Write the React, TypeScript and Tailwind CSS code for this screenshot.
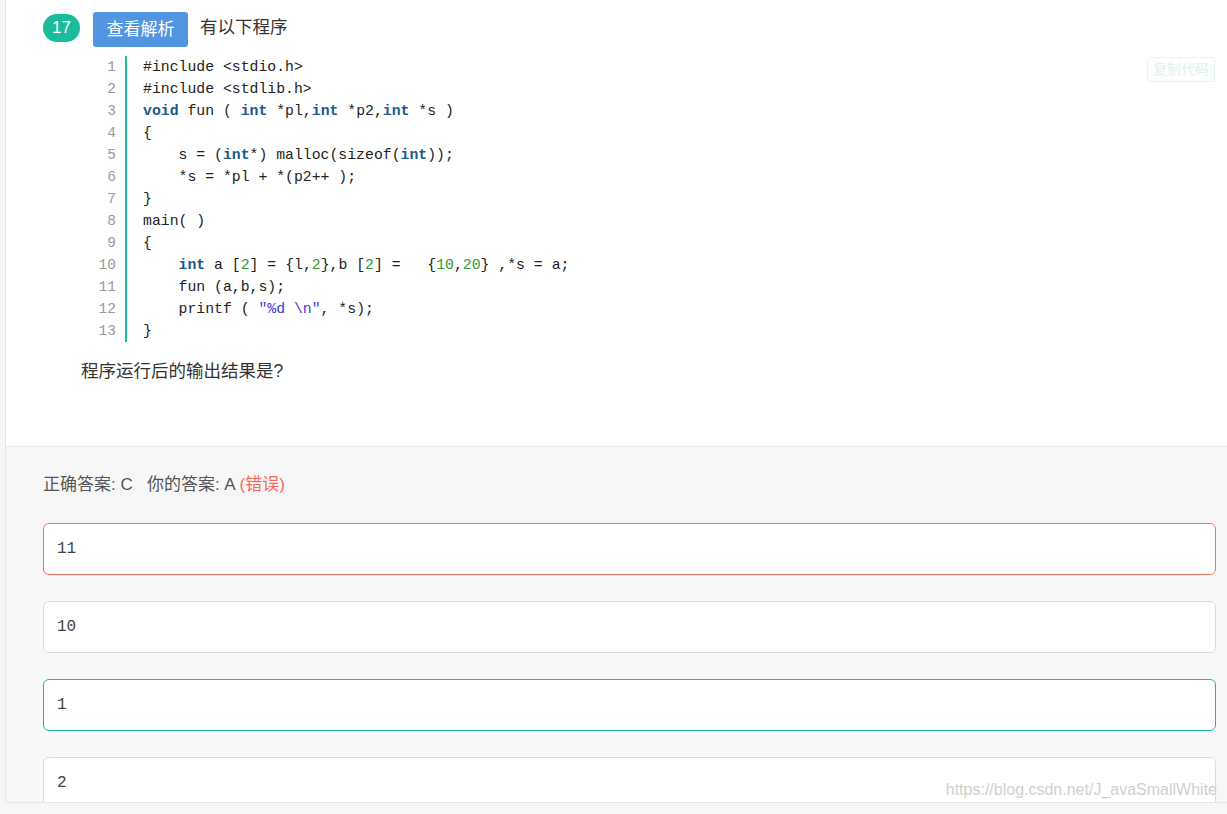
import React from "react";

const mono = { fontFamily: "'Liberation Mono', 'DejaVu Sans Mono', monospace" };

const K = ({ children }: { children: React.ReactNode }) => (
  <span className="font-bold text-[#1b5a8a]">{children}</span>
);
const N = ({ children }: { children: React.ReactNode }) => (
  <span className="text-[#2e9a2e]">{children}</span>
);

const lines: React.ReactNode[] = [
  <>#include &lt;stdio.h&gt;</>,
  <>#include &lt;stdlib.h&gt;</>,
  <>
    <K>void</K> fun ( <K>int</K> *pl,<K>int</K> *p2,<K>int</K> *s )
  </>,
  <>{"{"}</>,
  <>
    {"    s = ("}
    <K>int</K>*) malloc(sizeof(<K>int</K>));
  </>,
  <>{"    *s = *pl + *(p2++ );"}</>,
  <>{"}"}</>,
  <>main( )</>,
  <>{"{"}</>,
  <>
    {"    "}
    <K>int</K> a [<N>2</N>] = {"{"}l,<N>2</N>
    {"}"},b [<N>2</N>] = {"  {"}
    <N>10</N>,<N>20</N>
    {"}"} ,*s = a;
  </>,
  <>{"    fun (a,b,s);"}</>,
  <>
    {"    printf ( "}
    <span className="text-[#3b3bd6]">"%d \n"</span>, *s);
  </>,
  <>{"}"}</>,
];

const options = [
  { text: "11", border: "border-[#f07361]" },
  { text: "10", border: "border-[#dcdcdc]" },
  { text: "1", border: "border-[#1abc9c]" },
  { text: "2", border: "border-[#dcdcdc]" },
];

export default function App() {
  return (
    <div
      className="relative h-[814px] w-full overflow-hidden bg-[#f7f7f8] text-[#333]"
      style={{ fontFamily: "'Liberation Sans', 'Noto Sans CJK SC', sans-serif" }}
    >
      <div className="ml-[5px] flex h-[803px] flex-col overflow-hidden border-b border-l border-[#e6e6e6] bg-white">
        {/* Question */}
        <div className="relative h-[446px] shrink-0 bg-white">
          <div className="flex items-start pl-[37px] pt-[12px]">
            <div className="mt-[2px] flex h-[28px] w-[37px] items-center justify-center rounded-full bg-[#1abc9c] text-[17px] text-white">
              17
            </div>
            <div className="ml-[13px] flex h-[35px] w-[95px] items-center justify-center rounded-[3px] bg-[#5295e0] text-[17px] text-white">
              查看解析
            </div>
            <div className="ml-[12px] mt-[2px] text-[17.5px] leading-[26px]">有以下程序</div>
          </div>

          {/* code */}
          <div className="mt-[9px] flex pl-[86px]" style={mono}>
            <div className="w-[24px] text-right text-[14.5px] leading-[22px] text-[#9a9a9a]">
              {lines.map((_, i) => (
                <div key={i}>{i + 1}</div>
              ))}
            </div>
            <div className="ml-[9px] w-[2px] self-stretch bg-[#1abc9c]" />
            <div className="ml-[16px] whitespace-pre text-[14.8px] leading-[22px] text-[#222]">
              {lines.map((l, i) => (
                <div key={i}>{l}</div>
              ))}
            </div>
          </div>

          <div className="absolute right-[12px] top-[57px] flex h-[25px] w-[68px] items-center justify-center rounded-[3px] border border-[#e2f6f1] text-[14px] text-[#dbf3ed]">
            复制代码
          </div>

          <div className="mt-[17px] pl-[75px] text-[17.5px] leading-[24px]">程序运行后的输出结果是?</div>
        </div>

        {/* Answer */}
        <div className="flex-1 border-t border-[#ebebeb] bg-[#f7f7f7] pl-[37px] pr-[11px] pt-[26px]">
          <div className="text-[17px] leading-[24px] text-[#555]">
            正确答案: C&nbsp;&nbsp;&nbsp;你的答案: A <span className="text-[#f56c5c]">(错误)</span>
          </div>
          <div className="mt-[26px] flex flex-col gap-[26px]">
            {options.map((o) => (
              <div
                key={o.text}
                className={`flex h-[52px] items-center rounded-[6px] border bg-white pl-[13px] text-[16px] text-[#444] ${o.border}`}
                style={mono}
              >
                {o.text}
              </div>
            ))}
          </div>
        </div>
      </div>

      <div className="absolute bottom-[12px] right-[10px] text-[16px] text-[#d0d0d0]">
        https://blog.csdn.net/J_avaSmallWhite
      </div>
    </div>
  );
}
